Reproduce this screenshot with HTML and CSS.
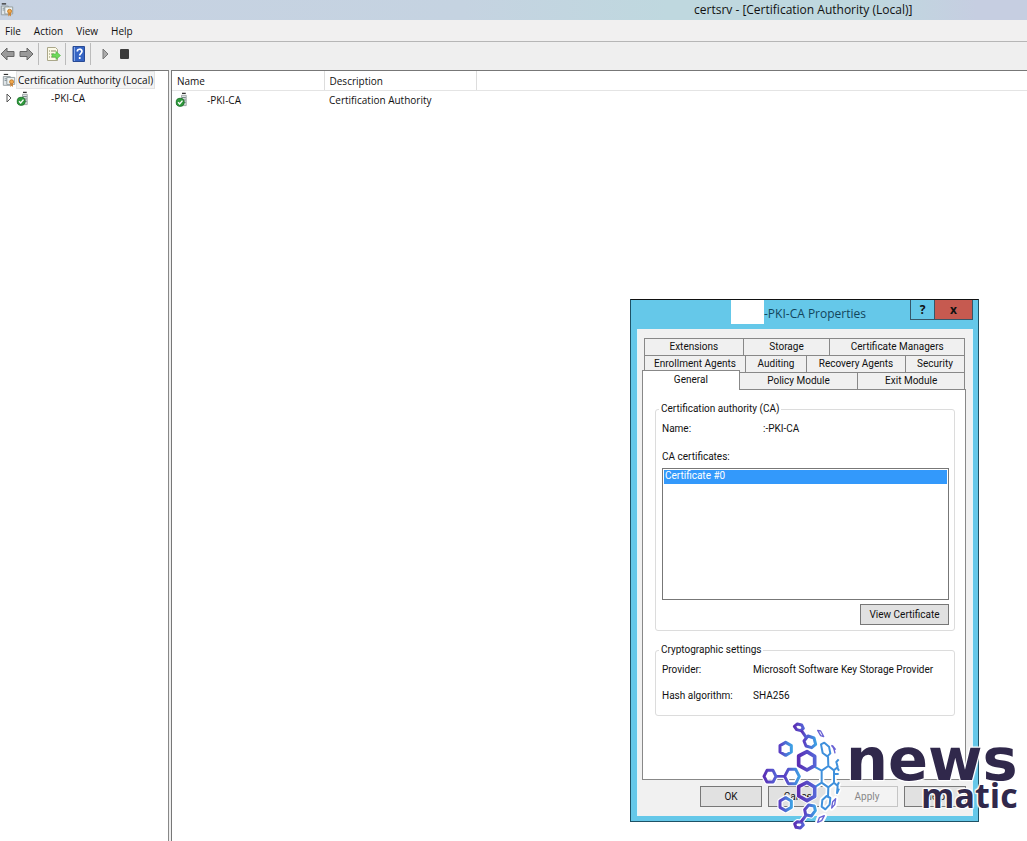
FILE: index.html
```
<!DOCTYPE html>
<html lang="en">
<head>
<meta charset="utf-8">
<title>certsrv - [Certification Authority (Local)]</title>
<link rel="stylesheet" href="styles.css">
</head>
<body>
<svg class="defs" aria-hidden="true">
  <defs>
    <symbol id="authority" viewBox="0 0 16 16">
      <path d="M2 1h5" stroke="#333" stroke-width="1.5"/>
      <path d="M1.500 3.500h8v10h-8z" fill="#dfe5e8" stroke="#8f989c"/>
      <path d="M3 6h4M3 8h3" stroke="#7c8a92"/>
      <path d="M5.500 4.500h9v8h-9z" fill="#eef3f3" stroke="#8d9799"/>
      <circle cx="11" cy="9.500" r="2.300" fill="#f2a94a" stroke="#bb762a"/>
      <path d="M9.500 11v4.500l1.500-1.500 1.500 1.500V11z" fill="#c98439"/>
    </symbol>
    <symbol id="server" viewBox="0 0 14 16">
      <path d="M7 1.500h4" stroke="#333" stroke-width="1.500"/>
      <path d="M6.500 3.500h5v11h-5z" fill="#dde2e2" stroke="#9da5a5"/>
      <path d="M7 6h4M7 8.500h4M7 11h4" stroke="#69787a"/>
      <circle cx="5" cy="11" r="4.300" fill="#2f9a3c" stroke="#1c7229"/>
      <path d="M2.800 11l1.700 1.800 3-3.600" fill="none" stroke="#fff" stroke-width="1.500"/>
    </symbol>
  </defs>
</svg>
<div class="app">
  <header class="titlebar">
    <svg class="app-icon" viewBox="0 0 16 16"><use href="#authority"/></svg>
    <h1 class="app-title">certsrv - [Certification Authority (Local)]</h1>
  </header>
  <nav class="menubar">
    <button class="menu">File</button><button class="menu">Action</button><button class="menu">View</button><button class="menu">Help</button>
  </nav>
  <div class="toolbar">
    <button class="tool" aria-label="Back"><svg width="15" height="14" viewBox="0 0 15 14"><path d="M1 7l6-6v3.500h7v5H7V13z" fill="#999" stroke="#666"/></svg></button>
    <button class="tool" aria-label="Forward"><svg width="15" height="14" viewBox="0 0 15 14"><path d="M14 7L8 1v3.500H1v5h7V13z" fill="#999" stroke="#666"/></svg></button>
    <span class="divider"></span>
    <button class="tool export" aria-label="Export list"><svg width="16" height="16" viewBox="0 0 16 16"><path d="M2.500 1.500h8l2 2v11h-10z" fill="#fcfae6" stroke="#aaa78a"/><path d="M4 5h1M6 5h5M4 8h1M6 8h3M4 11h1M6 11h5" stroke="#8a8a68"/><path d="M7 8h4V5.500L15.500 9.500 11 13.500V11H7z" fill="#6fd95a" stroke="#46b53c" stroke-width=".6"/></svg></button>
    <span class="divider"></span>
    <button class="tool help-tool" aria-label="Help"><svg width="14" height="16" viewBox="0 0 14 16"><path d="M1 .5h11.500v15H1z" fill="#3564c4" stroke="#284a94"/><path d="M2.500 1v14" stroke="#86a9e8"/><path d="M5.300 5.500c0-3 4.700-3 4.700-.2 0 2-2.300 2-2.300 4.300M7.700 11v2" fill="none" stroke="#fff" stroke-width="1.700"/></svg></button>
    <span class="divider"></span>
    <button class="tool start" aria-label="Start service"><svg width="7" height="12" viewBox="0 0 7 12"><path d="M1 1l5 5-5 5z" fill="#aaa" stroke="#777"/></svg></button>
    <button class="tool stop" aria-label="Stop service"><svg width="9" height="10" viewBox="0 0 9 10"><rect width="9" height="10" rx="1" fill="#3c3c3c"/></svg></button>
  </div>
  <main class="panes">
    <aside class="tree">
      <div class="node root"><svg class="icon" viewBox="0 0 16 16"><use href="#authority"/></svg><span class="selected">Certification Authority (Local)</span></div>
      <div class="node child"><svg class="twisty" viewBox="0 0 6 10"><path d="M1 1l4 4-4 4z" fill="#fff" stroke="#555"/></svg><svg class="icon" viewBox="0 0 14 16"><use href="#server"/></svg><span class="child-name">-PKI-CA</span></div>
    </aside>
    <section class="list">
      <table class="grid">
        <thead><tr><th class="c1">Name</th><th class="c2">Description</th><th></th></tr></thead>
        <tbody><tr><td><div class="cell"><svg class="icon" viewBox="0 0 14 16"><use href="#server"/></svg><span>-PKI-CA</span></div></td><td class="desc">Certification Authority</td><td></td></tr></tbody>
      </table>
    </section>
  </main>
</div>

<div class="dialog" role="dialog" aria-labelledby="dlg-title">
  <div class="dlg-head">
    <div class="dlg-caption"><span class="blank"></span><h2 class="dlg-title" id="dlg-title">-PKI-CA Properties</h2></div>
    <div class="dlg-buttons"><button class="cap help">?</button><button class="cap close" aria-label="Close">x</button></div>
  </div>
  <div class="dlg-body">
    <div class="tabs" role="tablist">
      <div class="tabrow r1"><button class="tab" role="tab">Extensions</button><button class="tab" role="tab">Storage</button><button class="tab" role="tab">Certificate Managers</button></div>
      <div class="tabrow r2"><button class="tab" role="tab">Enrollment Agents</button><button class="tab" role="tab">Auditing</button><button class="tab" role="tab">Recovery Agents</button><button class="tab" role="tab">Security</button></div>
      <div class="tabrow r3"><button class="tab active" role="tab" aria-selected="true">General</button><button class="tab" role="tab">Policy Module</button><button class="tab" role="tab">Exit Module</button></div>
    </div>
    <div class="sheet" role="tabpanel">
      <fieldset class="group">
        <legend>Certification authority (CA)</legend>
        <div class="field ca-name"><span>Name:</span><span class="value">:-PKI-CA</span></div>
        <label class="list-label" for="certs">CA certificates:</label>
        <select class="certs" id="certs" size="8"><option class="cert">Certificate #0</option></select>
        <button class="btn view">View Certificate</button>
      </fieldset>
      <fieldset class="group crypto">
        <legend>Cryptographic settings</legend>
        <div class="field"><span>Provider:</span><span>Microsoft Software Key Storage Provider</span></div>
        <div class="field"><span>Hash algorithm:</span><span>SHA256</span></div>
      </fieldset>
    </div>
    <div class="actions"><button class="btn">OK</button><button class="btn">Cancel</button><button class="btn" disabled>Apply</button><button class="btn">Help</button></div>
  </div>
</div>

<div class="brand">
  <svg class="mark" viewBox="0 0 300 360" fill="none" stroke-linejoin="round" aria-hidden="true">
    <defs>
      <linearGradient id="g" x1="0" x2="1" y1="0" y2="0"><stop offset="0" stop-color="#5b3fc4"/><stop offset="1" stop-color="#3d9fe4"/></linearGradient>
      <linearGradient id="p" x1="0" x2="1" y1="0" y2="0"><stop offset="0" stop-color="#5b2fb4"/><stop offset="1" stop-color="#5563d6"/></linearGradient>
      <g id="small">
        <path d="M90 92l17-10 17 10v19l-17 10-17-10z"/>
        <path d="M90 258l17-10 17 10v19l-17 10-17-10z"/>
        <path d="M115 163h22l11 21-11 22h-22l-11-22z"/>
        <path d="M162 78l12-15 18 6 5 19-12 10-17-5z"/>
        <path d="M164 284l12-14 17 3 3 14-12 16-17-4z"/>
      </g>
      <g id="ends">
        <path d="M51 166h18l9 18-9 17H51l-9-17z"/>
        <path d="M133 34l9-7 13 3 5 10-8 7-12-3z"/>
        <path d="M134 327l8-7 13 2 5 8-9 9-13-2z"/>
        <path d="M154 46l15 22"/><path d="M168 301l-15 20"/>
      </g>
      <path id="bar" d="M78 184h26"/>
      <g id="mesh">
        <path d="M234 124l1 29M193 155l22 12M215 167l20-14 17 13M215 167v36M252 166v37M215 203l20 14 17-14M193 217l22-14M235 217l-1 30"/>
        <path d="M252 166l11-10-4-15 7-8M252 177h14M252 203l11 10-2 21 6-13M262 158l5 9M262 211l5-9"/>
        <path d="M213 88l10-5 14 12 4 20-9 9-14-10z"/><path d="M217 255l13-12 11 6-2 20-13 14-11-8z"/>
      </g>
      <g id="hexes">
        <path d="M146 123l25-13 23 14v28l-23 13-25-14z"/>
        <path d="M146 215l25-13 23 14v28l-23 13-25-14z"/>
      </g>
      <g id="slivers">
        <path d="M203 46l9 2 9 17-9-3z"/><path d="M244 91c8 5 9 14 11 24M247 91l10 13"/><path d="M203 322l5-14 15-6-8 15z"/><path d="M245 279l3-19 9-9-3 18z"/>
      </g>
    </defs>
    <g stroke="#fff" stroke-width="16"><use href="#small"/><use href="#ends"/><use href="#bar"/><use href="#mesh"/><use href="#hexes"/><use href="#slivers"/></g>
    <use href="#mesh" stroke="#3f90dc" stroke-width="6"/>
    <use href="#bar" stroke="#5546c5" stroke-width="8"/>
    <g stroke="url(#g)" stroke-width="9">
      <path d="M90 92l17-10 17 10v19l-17 10-17-10z"/>
      <path d="M90 258l17-10 17 10v19l-17 10-17-10z"/>
      <path d="M115 163h22l11 21-11 22h-22l-11-22z"/>
      <path d="M162 78l12-15 18 6 5 19-12 10-17-5z"/>
      <path d="M164 284l12-14 17 3 3 14-12 16-17-4z"/>
    </g>
    <use href="#ends" stroke="url(#p)" stroke-width="9"/>
    <use href="#hexes" stroke="url(#p)" stroke-width="11"/>
    <use href="#slivers" stroke="#6a62d4" stroke-width="4"/>
  </svg>
  <div class="words"><span class="news">news</span><span class="matic">matic</span></div>
</div>
</body>
</html>
```
FILE: styles.css
```
* { box-sizing: border-box; }
body {
  margin: 0;
  min-height: 100vh;
  position: relative;
  overflow: hidden;
  background: #fff;
  color: #111;
  font: 10px/16px Roboto, "Liberation Sans", sans-serif;
}
button { margin: 0; padding: 0; border: 0; background: none; color: inherit; font: inherit; }
h1, h2 { margin: 0; font-weight: 400; }
svg { display: block; flex: none; }
.defs { position: absolute; width: 0; height: 0; }

.app { display: flex; flex-direction: column; min-height: 100vh; font-family: "Open Sans", sans-serif; font-size: 10px; }
.titlebar {
  display: flex; align-items: center; height: 20px;
  background: linear-gradient(90deg, #c7d2e2 0, #c5d3e1 45%, #bfd8df 65%, #bfd8df 85%, #c6cee1 95%);
}
.app-icon { width: 14px; height: 16px; }
.app-title { flex: 1; padding-left: 680px; font-size: 12px; line-height: 18px; white-space: nowrap; }
.menubar { display: flex; gap: 13px; height: 22px; padding: 0 5px; background: #f1f0f0; border-bottom: 1px solid #b6b6b6; }
.toolbar { display: flex; align-items: center; gap: 4px; height: 28px; padding-bottom: 4px; background: #efefef; }
.divider { width: 1px; height: 22px; background: #bbb; }
.export { margin-left: 2px; }
.help-tool { margin-left: 2px; }
.start { margin-left: 7px; }
.stop { margin-left: 7px; }

.panes { display: flex; flex: 1; gap: 2px; background: #efefef; }
.tree { width: 169px; background: #fff; border-top: 1px solid #777; border-right: 1px solid #888; }
.list { flex: 1; background: #fff; border-top: 1px solid #777; border-left: 1px solid #777; }
.node { display: flex; align-items: center; height: 18px; white-space: nowrap; }
.icon { width: 14px; height: 15px; }
.root { padding-left: 2px; }
.selected { padding: 0 1px; background: #f3f3f3; border: 1px solid #e2e2e2; }
.child { padding-left: 6px; }
.twisty { width: 6px; height: 10px; margin-right: 4px; }
.child-name { padding-left: 21px; }
.grid { width: 100%; table-layout: fixed; border-collapse: collapse; }
.grid th { height: 19px; padding: 2px 5px 0; font-weight: 400; text-align: left; border-right: 1px solid #ddd; border-bottom: 1px solid #e4e4e4; }
.grid th:last-child { border-right: 0; }
.grid td { padding: 1px 5px; }
.grid td:first-child { padding-left: 3px; }
.grid .c1, .grid .c2 { width: 152px; }
.cell { display: flex; align-items: center; gap: 18px; }

.dialog {
  position: absolute; left: 630px; top: 299px; width: 349px;
  padding: 0 5px 5px 6px;
  background: #65c8e9; border: 1px solid #1e5266; border-top-color: #111;
}
.dlg-head { display: flex; justify-content: space-between; height: 29px; }
.dlg-caption { display: flex; align-items: flex-start; padding-left: 94px; }
.blank { width: 33px; height: 24px; background: #fff; }
.dlg-title { color: #12455c; font: 12px/28px "Open Sans", sans-serif; white-space: nowrap; }
.dlg-buttons { display: flex; height: 20px; }
.cap { width: 25px; border: 1px solid #35576a; border-top: 0; color: #111; font: bold 12px/18px "Open Sans", sans-serif; }
.close { width: 39px; margin-left: -1px; background: #c65a50; }
.dlg-body { padding: 9px 6px 9px 4px; background: #f1f1f1; border: 1px solid #e6f6fb; border-width: 0 1px; }
.tabs { padding: 0 1px 0 2px; }
.tabrow { display: grid; height: 17px; }
.r1 { grid-template-columns: 99fr 87fr 136fr; }
.r2 { grid-template-columns: 101fr 61fr 99fr 60fr; }
.r3 { grid-template-columns: 96fr 118fr 108fr; }
.tab { border: 1px solid #888; border-width: 1px 0 0 1px; background: #f0f0f0; line-height: 16px; white-space: nowrap; }
.tab:last-child { border-right-width: 1px; }
.active { position: relative; margin: -2px 0 -1px -2px; padding-bottom: 2px; background: #fff; border-right-width: 1px; }
.active + .tab { border-left-width: 0; }
.sheet { height: 391px; padding: 12px 10px 0 12px; background: #fff; border: 1px solid #888; }
.group { margin: 0 0 12px; padding: 5px 5px 5px 6px; border: 1px solid #dcdcdc; border-radius: 3px; min-width: 0; }
.group legend { margin-left: -3px; padding: 0 2px; line-height: 14px; }
.field { display: grid; grid-template-columns: 91px 1fr; margin-bottom: 10px; white-space: nowrap; }
.ca-name { margin-bottom: 12px; }
.value { padding-left: 10px; }
.list-label { display: block; margin-bottom: 3px; }
.certs { display: block; width: 100%; height: 132px; padding: 1px; overflow: hidden; border: 1px solid #777; border-radius: 0; background: #fff; font: inherit; outline: 0; }
.cert { min-height: 14px; padding: 0 1px; line-height: 14px; color: #fff; background: #3399fb; }
.btn { height: 21px; border: 1px solid #777; background: #e1e1e1; }
.view { display: block; width: 89px; margin: 4px 0 0 auto; }
.crypto { margin: 0; padding-bottom: 1px; }
.actions { display: grid; grid-template-columns: repeat(4, 62px); gap: 6px; justify-content: end; padding: 6px 0 0; }
.btn:disabled { color: #888; background: #f3f3f3; border-color: #c5c5c5; }

.brand { position: absolute; left: 750px; top: 715px; display: flex; }
.mark { width: 100px; height: 120px; }
.words { display: flex; flex-direction: column; align-items: flex-end; padding-top: 16px; margin-left: -4px; color: #30284b; font-weight: 700; text-shadow: 0 0 2px #fff, 1px 1px 1px #fff, -1px -1px 1px #fff, 1px -1px 1px #fff, -1px 1px 1px #fff; }
.news { font-family: "DejaVu Sans", sans-serif; font-size: 59px; line-height: 58px; }
.matic { font-family: "Open Sans", sans-serif; font-size: 34px; line-height: 12px; }
```
